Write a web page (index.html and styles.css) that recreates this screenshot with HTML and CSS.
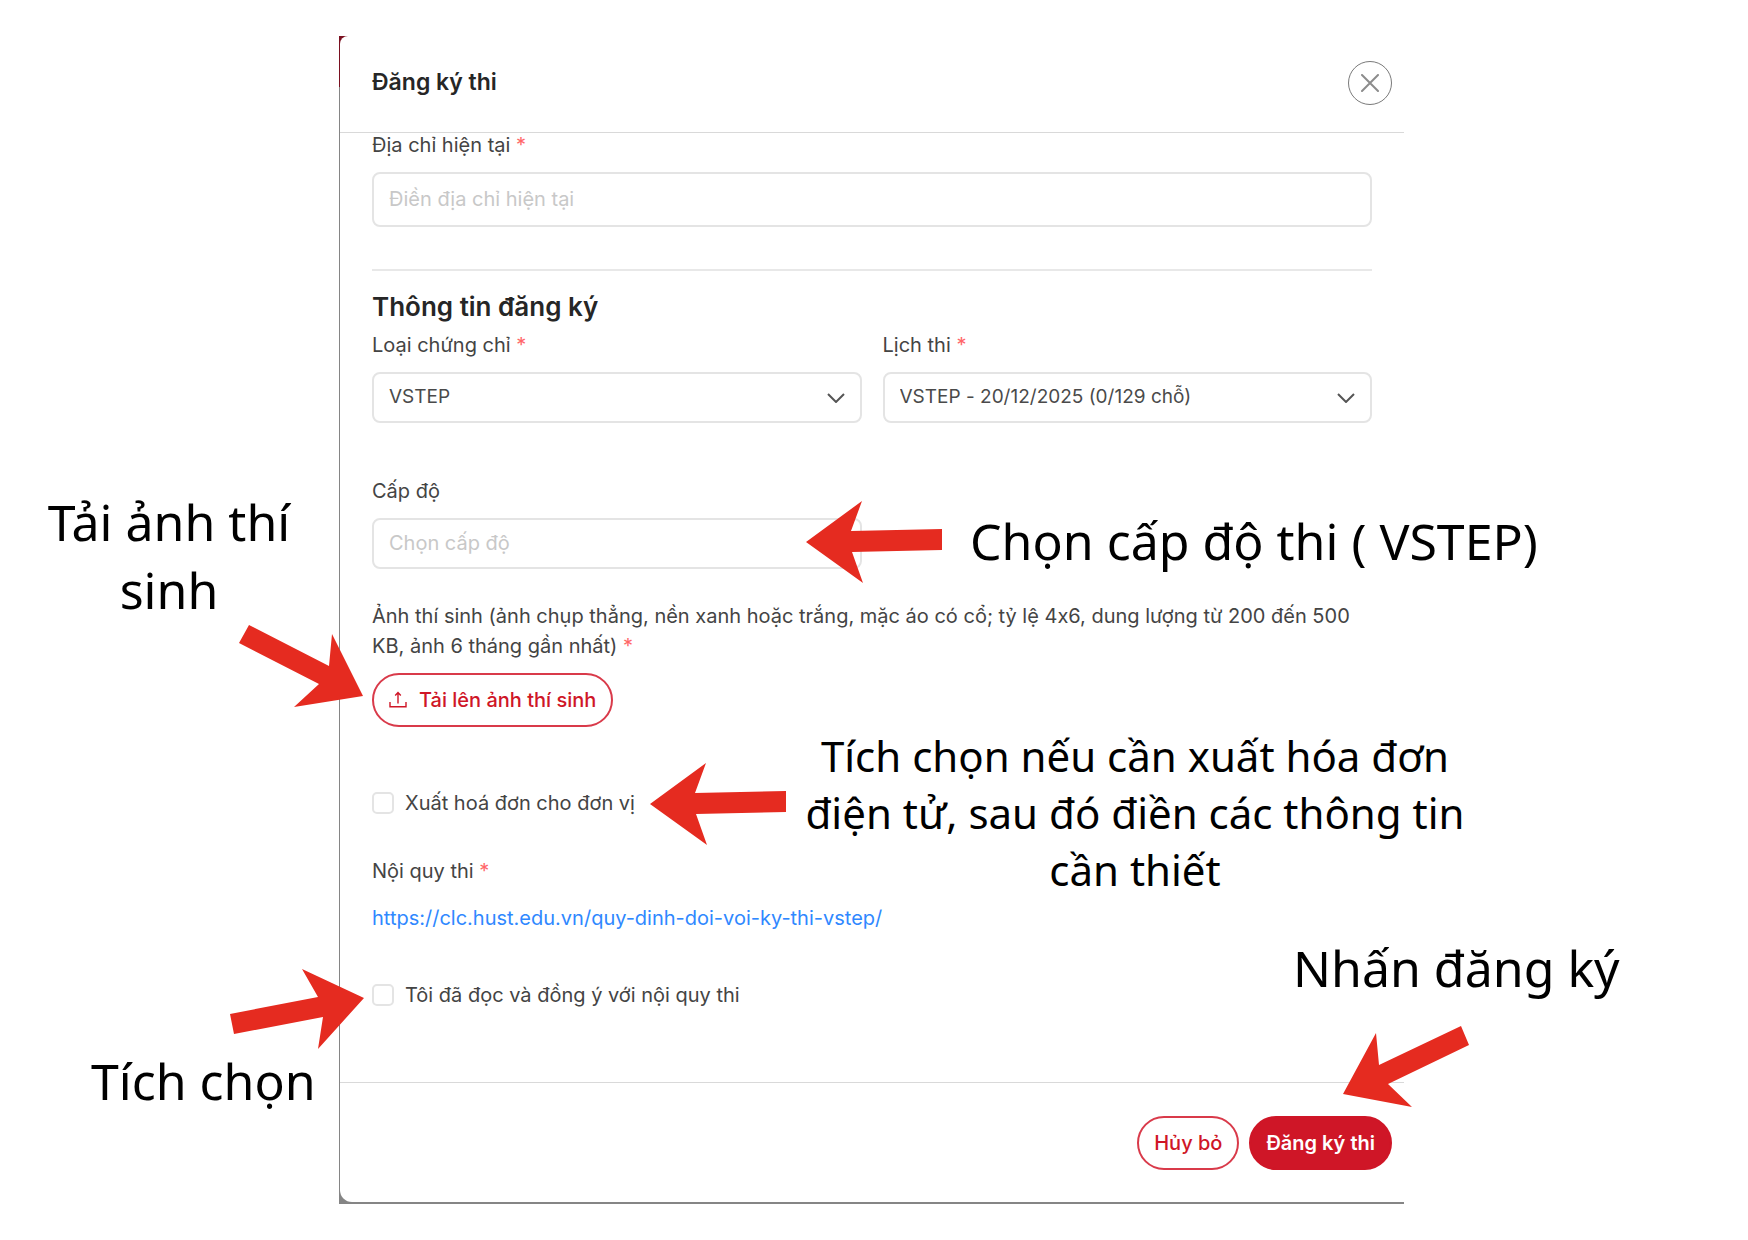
FILE: index.html
```html
<!DOCTYPE html>
<html lang="vi">
<head>
<meta charset="utf-8">
<meta name="viewport" content="width=device-width, initial-scale=1">
<title>Đăng ký thi</title>
<link rel="stylesheet" href="styles.css">
</head>
<body>
<main class="guide">
  <div class="backdrop">
    <form class="dialog">
      <header class="dialog-header">
        <h1 class="dialog-title">Đăng ký thi</h1>
        <button class="close" type="button" aria-label="Đóng">
          <svg width="18" height="18" viewBox="0 0 18 18" fill="none" stroke="#8c8c8c" stroke-width="2" stroke-linecap="round"><path d="M1 1 17 17M17 1 1 17"/></svg>
        </button>
      </header>

      <div class="dialog-body">
        <div class="field">
          <label class="label" for="address">Địa chỉ hiện tại <span class="required">*</span></label>
          <input class="text-input" id="address" type="text" placeholder="Điền địa chỉ hiện tại">
        </div>

        <hr class="divider">
        <h2 class="section-title">Thông tin đăng ký</h2>

        <div class="field-grid">
          <div class="field">
            <label class="label" for="certificate">Loại chứng chỉ <span class="required">*</span></label>
            <div class="select-box">
              <select class="select" id="certificate"><option>VSTEP</option></select>
              <svg class="chevron" width="18" height="10" viewBox="0 0 18 10"><path d="M1 1 9 9 17 1"/></svg>
            </div>
          </div>
          <div class="field">
            <label class="label" for="schedule">Lịch thi <span class="required">*</span></label>
            <div class="select-box">
              <select class="select" id="schedule"><option>VSTEP - 20/12/2025 (0/129 chỗ)</option></select>
              <svg class="chevron" width="18" height="10" viewBox="0 0 18 10"><path d="M1 1 9 9 17 1"/></svg>
            </div>
          </div>
          <div class="field">
            <label class="label" for="level">Cấp độ</label>
            <div class="select-box">
              <select class="select select-empty" id="level"><option>Chọn cấp độ</option></select>
            </div>
          </div>
        </div>

        <div class="photo">
          <p class="photo-text">Ảnh thí sinh (ảnh chụp thẳng, nền xanh hoặc trắng, mặc áo có cổ; tỷ lệ 4x6, dung lượng từ 200 đến 500 KB, ảnh 6 tháng gần nhất) <span class="required">*</span></p>
          <button class="button" type="button">
            <svg width="18" height="18" viewBox="0 0 18 18" fill="none" stroke="#cf1627" stroke-width="1.4"><path d="M1 11V15.700H17V11M9 12.500V2M6.200 4.600 9 1.600 11.800 4.600"/></svg>
            Tải lên ảnh thí sinh
          </button>
        </div>

        <label class="check check-invoice"><input class="checkbox" type="checkbox">Xuất hoá đơn cho đơn vị</label>

        <p class="rules-label">Nội quy thi <span class="required">*</span></p>
        <a class="rules-link" href="https://clc.hust.edu.vn/quy-dinh-doi-voi-ky-thi-vstep/">https://clc.hust.edu.vn/quy-dinh-doi-voi-ky-thi-vstep/</a>

        <label class="check check-agree"><input class="checkbox" type="checkbox">Tôi đã đọc và đồng ý với nội quy thi</label>
      </div>

      <footer class="dialog-footer">
        <button class="button" type="button">Hủy bỏ</button>
        <button class="button button-primary" type="submit">Đăng ký thi</button>
      </footer>
    </form>
  </div>

  <p class="note note-upload">Tải ảnh thí sinh</p>
  <p class="note note-level">Chọn cấp độ thi ( VSTEP)</p>
  <p class="note note-invoice">Tích chọn nếu cần xuất hóa đơn điện tử, sau đó điền các thông tin cần thiết</p>
  <p class="note note-agree">Tích chọn</p>
  <p class="note note-submit">Nhấn đăng ký</p>

  <svg class="arrow arrow-upload" width="124" height="82" viewBox="239 625 124 82"><path d="M249 625 239 643 319 684 294 707 363 696 332 634 329 666Z"/></svg>
  <svg class="arrow arrow-level" width="136" height="82" viewBox="806 501 136 82"><path d="M806 542 862 501 851 531 942 529V550L852 552 863 583Z"/></svg>
  <svg class="arrow arrow-invoice" width="136" height="82" viewBox="806 501 136 82"><path d="M806 542 862 501 851 531 942 529V550L852 552 863 583Z"/></svg>
  <svg class="arrow arrow-agree" width="134" height="80" viewBox="230 969 134 80"><path d="M302 969 318 997 230 1014 234 1034 323 1017 318 1049 364 998Z"/></svg>
  <svg class="arrow arrow-submit" width="126" height="81" viewBox="1343 1026 126 81"><path d="M1461 1026 1469 1045 1388 1084 1412 1107 1343 1094 1376 1033 1379 1065Z"/></svg>
</main>
</body>
</html>
```
FILE: styles.css
```css
* {
  box-sizing: border-box;
}

body {
  margin: 0;
  background: #fff;
  color: #444;
  font-family: Inter, "Noto Sans", sans-serif;
  font-size: 20px;
  font-feature-settings: "calt" 0;
  line-height: 24px;
}

h1, h2, p {
  margin: 0;
}

button, input, select {
  font: inherit;
}

.guide {
  position: relative;
  padding: 36px 344px 37px 339px;
}

/* The page behind the dialog shows as a thin edge: red banner, then grey. */
.backdrop {
  padding: 0 0 2px 1px;
  background: linear-gradient(#7a1020 51px, #858585 51px);
}

.dialog {
  background: #fff;
  border-radius: 8px 0 0 12px;
}

.dialog-header {
  display: flex;
  align-items: center;
  justify-content: space-between;
  height: 97px;
  padding: 0 12px 2px 32px;
  border-bottom: 1px solid #d9d9d9;
}

.dialog-title {
  padding-bottom: 2px;
  color: #262626;
  font-size: 23px;
  font-weight: 600;
}

.close {
  display: flex;
  align-items: center;
  justify-content: center;
  width: 44px;
  height: 44px;
  padding: 0;
  border: 1px solid #7a7a7a;
  border-radius: 50%;
  background: none;
}

.dialog-body {
  padding: 0 32px 75px;
}

.field {
  display: flex;
  flex-direction: column;
  gap: 15px;
}

.required {
  color: #ff6668;
}

.text-input, .select {
  width: 100%;
  padding: 0 15px 2px;
  border: 2px solid #e4e4e4;
  border-radius: 8px;
  background: #fff;
  color: #4a4a4a;
}

.text-input {
  height: 55px;
}

.text-input::placeholder {
  color: #c8c8c8;
  opacity: 1;
}

.divider {
  height: 2px;
  margin: 42px 0 21px;
  border: 0;
  background: #e8e8e8;
}

.section-title {
  margin-bottom: 11px;
  color: #262626;
  font-size: 26px;
  font-weight: 600;
  line-height: 30px;
}

.field-grid {
  display: grid;
  grid-template-columns: 1fr 1fr;
  gap: 56px 21px;
}

.select-box {
  display: grid;
  align-items: center;
}

.select {
  grid-area: 1 / 1;
  height: 51px;
  font-size: 19px;
  appearance: none;
}

.select-empty {
  color: #c8c8c8;
  font-size: 20px;
}

.chevron {
  grid-area: 1 / 1;
  justify-self: end;
  margin-right: 17px;
  fill: none;
  stroke: #555;
  stroke-width: 2;
  pointer-events: none;
}

.photo {
  display: flex;
  flex-direction: column;
  align-items: flex-start;
  gap: 12px;
  margin-top: 32px;
}

.photo-text {
  line-height: 30px;
}

.button {
  display: flex;
  align-items: center;
  gap: 12px;
  height: 54px;
  padding: 0 15px;
  border: 2px solid #d93a4a;
  border-radius: 27px;
  background: #fff;
  color: #cf1627;
  font-weight: 500;
}

.button-primary {
  border-color: #cf1627;
  background: #cf1627;
  color: #fff;
  font-weight: 600;
}

.check {
  display: flex;
  align-items: center;
  gap: 11px;
}

.checkbox {
  width: 22px;
  height: 22px;
  margin: 0;
  border: 2px solid #e4e4e4;
  border-radius: 5px;
  background: #fff;
  appearance: none;
}

.check-invoice {
  margin-top: 64px;
}

.rules-label {
  margin-top: 44px;
}

.rules-link {
  display: inline-block;
  margin-top: 23px;
  color: #2f88ff;
  text-decoration: none;
}

.check-agree {
  margin-top: 53px;
}

.dialog-footer {
  display: flex;
  justify-content: flex-end;
  gap: 10px;
  padding: 33px 12px 32px;
  border-top: 1px solid #d9d9d9;
}

/* Tutorial notes and arrows lie over the dialog. */
.note {
  position: absolute;
  color: #000;
  font-family: "Noto Sans", sans-serif;
  font-size: 50px;
  line-height: 68px;
  text-align: center;
}

.note-upload {
  top: 488px;
  left: 39px;
  width: 260px;
}

.note-level {
  top: 507px;
  left: 970px;
}

.note-invoice {
  top: 727px;
  left: 800px;
  width: 670px;
  font-size: 42px;
  line-height: 57px;
}

.note-agree {
  top: 1047px;
  left: 91px;
}

.note-submit {
  top: 934px;
  left: 1293px;
}

.arrow {
  position: absolute;
  fill: #e52b20;
}

.arrow-upload {
  top: 625px;
  left: 239px;
}

.arrow-level {
  top: 501px;
  left: 806px;
}

.arrow-invoice {
  top: 763px;
  left: 650px;
}

.arrow-agree {
  top: 969px;
  left: 230px;
}

.arrow-submit {
  top: 1026px;
  left: 1343px;
}
```
